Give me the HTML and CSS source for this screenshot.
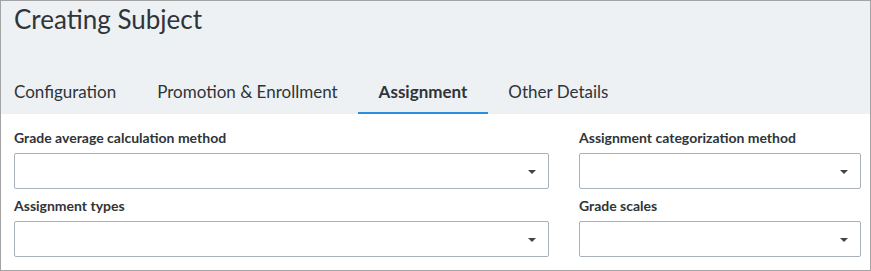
FILE: index.html
```html
<!DOCTYPE html>
<html lang="en">
<head>
    <meta charset="UTF-8">
    <meta name="viewport" content="width=device-width, initial-scale=1.0">
    <title>Creating Subject</title>
    <link rel="stylesheet" href="styles.css">
</head>
<body>
    <div class="panel">
        <div class="panel-header">
            <h1>Creating Subject</h1>
            <ul class="tabs">
                <li class="tab">Configuration</li>
                <li class="tab">Promotion &amp; Enrollment</li>
                <li class="tab active">Assignment</li>
                <li class="tab">Other Details</li>
            </ul>
        </div>

        <div class="form-grid">
            <div class="field">
                <label>Grade average calculation method</label>
                <div class="select"><span class="caret"></span></div>
            </div>
            <div class="field">
                <label>Assignment categorization method</label>
                <div class="select"><span class="caret"></span></div>
            </div>
            <div class="field">
                <label>Assignment types</label>
                <div class="select"><span class="caret"></span></div>
            </div>
            <div class="field">
                <label>Grade scales</label>
                <div class="select"><span class="caret"></span></div>
            </div>
        </div>
    </div>
</body>
</html>
```

FILE: styles.css
```css
* {
    box-sizing: border-box;
}

body {
    margin: 0;
    font-family: Lato, "Open Sans", sans-serif;
    color: #333;
}

.panel {
    width: 871px;
    height: 271px;
    border: 1px solid #a3a3a3;
    background-color: #fff;
}

.panel-header {
    background-color: #edf1f4;
    padding: 2px 0 0 13px;
}

h1 {
    margin: 0;
    font-size: 26px;
    font-weight: 400;
    line-height: 32px;
    color: #2f3438;
}

.tabs {
    list-style: none;
    margin: 46px 0 0 0;
    padding: 0;
    display: flex;
}

.tab {
    font-size: 17px;
    line-height: 22px;
    padding: 0 20.5px 9px 20.5px;
    color: #2f3438;
    border-bottom: 2px solid transparent;
}

.tab:first-child {
    padding-left: 0;
}

.tab.active {
    font-weight: 700;
    border-bottom-color: #2e8fdf;
}

.form-grid {
    display: grid;
    grid-template-columns: 535px 282px;
    column-gap: 30px;
    padding: 15px 0 0 13px;
}

.field {
    margin-bottom: 8px;
}

.field label {
    display: block;
    font-size: 14px;
    font-weight: 700;
    line-height: 17px;
    margin-bottom: 7px;
    color: #2f3438;
}

.select {
    position: relative;
    height: 36px;
    border: 1px solid #a9b2bb;
    border-radius: 2px;
    background-color: #fff;
}

.caret {
    position: absolute;
    right: 12px;
    top: 16px;
    width: 0;
    height: 0;
    border-left: 4px solid transparent;
    border-right: 4px solid transparent;
    border-top: 4px solid #444;
}
```
